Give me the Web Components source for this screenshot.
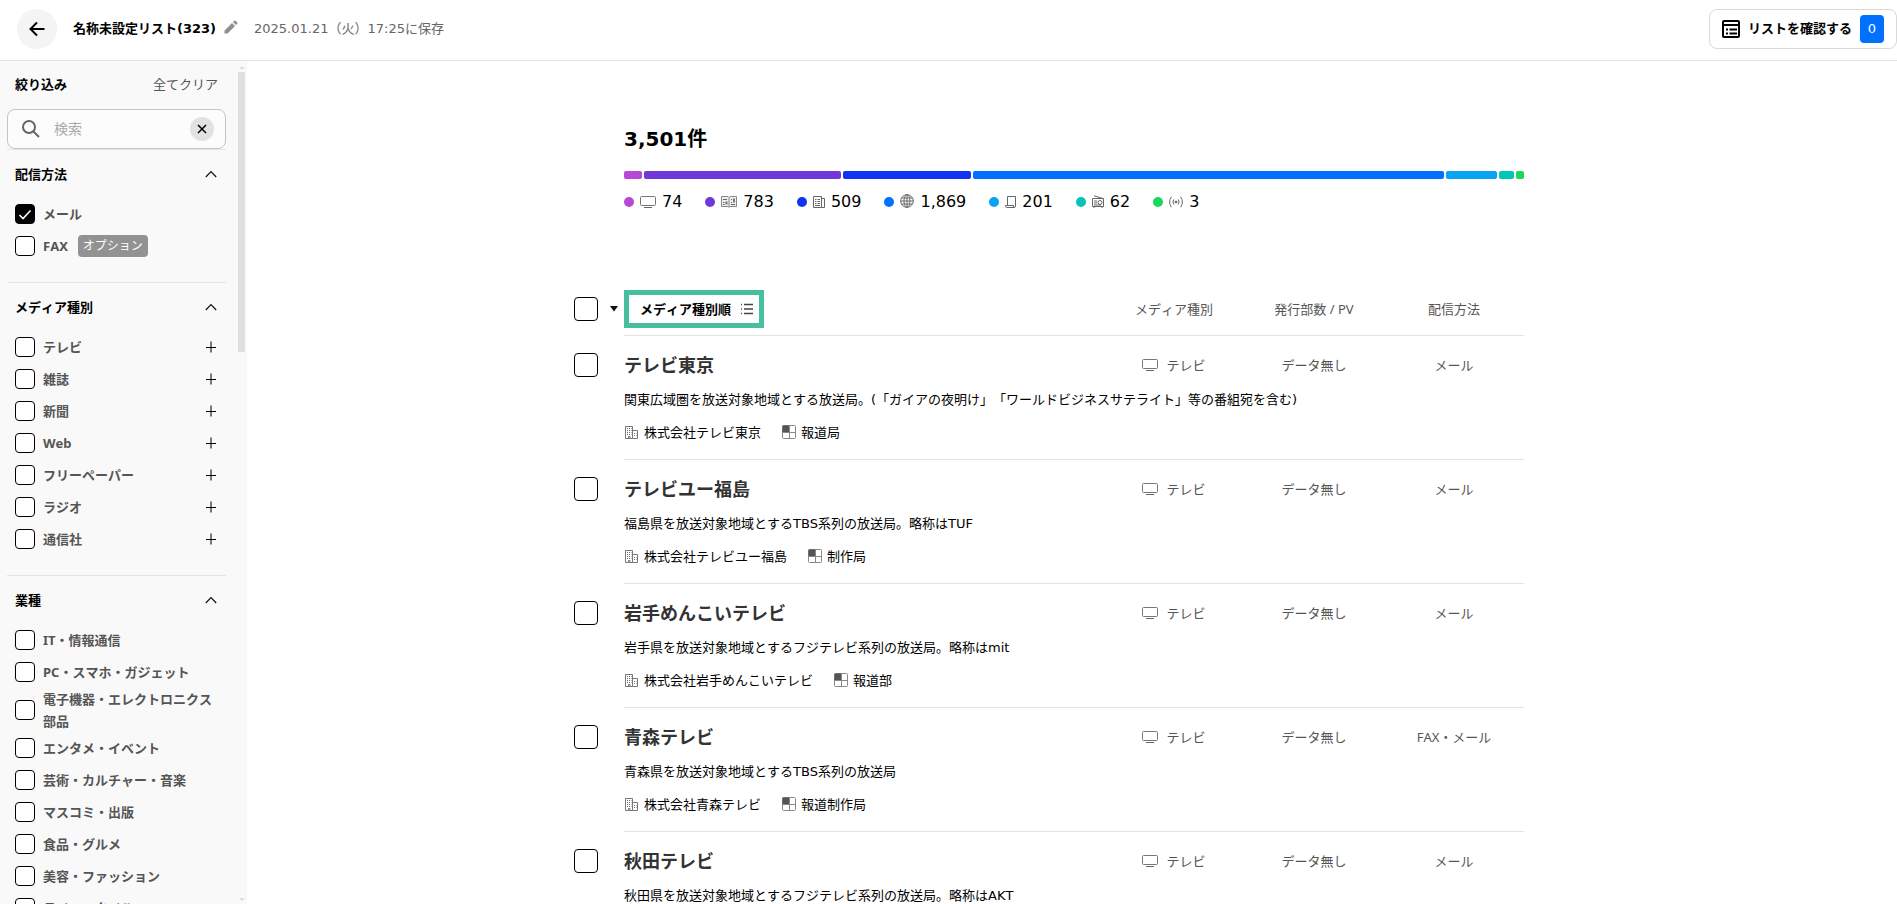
<!DOCTYPE html>
<html lang="ja">
<head>
<meta charset="utf-8">
<title>名称未設定リスト</title>
<style>
  :root {
    --font-ui: "Noto Sans", "Noto Sans CJK JP", sans-serif;
    --font-wide: "DejaVu Sans", "Noto Sans CJK JP", sans-serif;
    --line: #e4e4e4;
    --muted: #555;
  }
  body { margin: 0; background: #fff; color: #000; font: 13px/20px var(--font-ui); font-kerning: none; text-spacing-trim: space-all; }
</style>
</head>
<body>
<list-app>
  <app-header slot="header" heading="名称未設定リスト(323)" saved="2025.01.21（火）17:25に保存" count="0"></app-header>
  <filter-panel slot="filters">
    <filter-section heading="配信方法">
      <filter-option label="メール" checked></filter-option>
      <filter-option label="FAX" tag="オプション"></filter-option>
    </filter-section>
    <filter-section heading="メディア種別">
      <filter-option label="テレビ" expandable></filter-option>
      <filter-option label="雑誌" expandable></filter-option>
      <filter-option label="新聞" expandable></filter-option>
      <filter-option label="Web" expandable></filter-option>
      <filter-option label="フリーペーパー" expandable></filter-option>
      <filter-option label="ラジオ" expandable></filter-option>
      <filter-option label="通信社" expandable></filter-option>
    </filter-section>
    <filter-section heading="業種">
      <filter-option label="IT・情報通信"></filter-option>
      <filter-option label="PC・スマホ・ガジェット"></filter-option>
      <filter-option label="電子機器・エレクトロニクス部品"></filter-option>
      <filter-option label="エンタメ・イベント"></filter-option>
      <filter-option label="芸術・カルチャー・音楽"></filter-option>
      <filter-option label="マスコミ・出版"></filter-option>
      <filter-option label="食品・グルメ"></filter-option>
      <filter-option label="美容・ファッション"></filter-option>
      <filter-option label="ライフスタイル"></filter-option>
    </filter-section>
  </filter-panel>
  <media-summary total="3,501件"></media-summary>
  <media-table></media-table>
</list-app>

<script>
const RESET = `
  :host, *, *::before, *::after { box-sizing: border-box; }
  button { margin: 0; padding: 0; border: 0; background: none; color: inherit; font: inherit; cursor: pointer; }
  ui-icon { flex: none; }
`;

const CHECKBOX = `
  input[type=checkbox] {
    appearance: none; flex: none; margin: 0; width: var(--box, 20px); height: var(--box, 20px);
    border: 1px solid #000; border-radius: 4px; background: #fff; display: block;
  }
  input[type=checkbox]:checked {
    background: #000 url("data:image/svg+xml,%3Csvg xmlns='http://www.w3.org/2000/svg' viewBox='0 0 18 18'%3E%3Cpath d='M3.5 10l3.5 3.6L14.500 5.500' fill='none' stroke='white' stroke-width='1.500'/%3E%3C/svg%3E") center / 18px no-repeat;
  }
`;

/* name: [width, height, markup] */
const ICONS = {
  back: [16, 16, '<path d="M15.500 8H2M8 1.500L1.500 8 8 14.500" fill="none" stroke="#000" stroke-width="2"/>'],
  pencil: [14, 14, '<path d="M.5 10.500V13.500H3.500L11 6 8 3zM9 2L12 5 13.300 3.700Q13.800 3.200 13.300 2.600L11.400.7Q10.800.2 10.300.7z" fill="#8f8f8f"/>'],
  list: [18, 18, '<rect x="1" y="1" width="16" height="16" rx="1" fill="none" stroke="#000" stroke-width="2"/><path d="M1 5h16M4 9.500h2M7.500 9.500H15M4 13.500h2M7.500 13.500H15" stroke="#000" stroke-width="2"/>'],
  search: [18, 18, '<circle cx="7" cy="7" r="6" fill="none" stroke="#666" stroke-width="2"/><path d="M11.500 11.500L17 17" stroke="#666" stroke-width="2"/>'],
  close: [10, 10, '<path d="M1 1l8 8M9 1L1 9" stroke="#000" stroke-width="1.500"/>'],
  up: [12, 8, '<path d="M.8 7L6 1.500 11.200 7" fill="none" stroke="#111" stroke-width="1.200"/>'],
  plus: [10, 12, '<path d="M5 .5V11.500" stroke="#777" stroke-width="2"/><path d="M0 6.500H10" stroke="#000"/>'],
  caret: [8, 6, '<path d="M0 0H8L4 5.500z" fill="#111"/>'],
  lines: [12, 12, '<path d="M0 1.500h1M3 1.500h9M0 6h1M3 6h9M0 10.500h1M3 10.500h9" stroke="#444" stroke-width="1.500"/>'],
  tv: [16, 12, '<rect x=".5" y=".5" width="15" height="9" rx="1" fill="none" stroke="#777"/><path d="M4 11.500H12" stroke="#666"/>'],
  magazine: [16, 12, '<path d="M.5 .5H7L8 1.500 9 .5H15.500V10.500H9L8 11.500 7 10.500H.5zM8 1.500V11" fill="#eee" stroke="#888"/><path d="M2 3.500H6M2 6.500h1.500M2 8.500h1.500M10 3.500h1M10 6.500h1M10 8.500H14" stroke="#666"/><path d="M4.500 5.500h2v3h-2zM12 2.500h2v4h-2z" fill="#777"/>'],
  newspaper: [12, 12, '<path d="M.5 .5H8.500V11.500H.5zM8.500 2.500H11.500V11.500H8.500" fill="none" stroke="#666"/><path d="M2 3.500H3.500M4.500 3.500H7M2 5.500H3.500M4.500 5.500H7M2 7.500H3.500M4.500 7.500H7M2 9.500H7" stroke="#666"/>'],
  globe: [14, 16, '<g fill="none" stroke="#666"><circle cx="7" cy="7" r="6.300"/><ellipse cx="7" cy="7" rx="3" ry="6.300"/><path d="M7 .7V13.300M.7 7H13.300M1.500 4H12.500M1.500 10H12.500"/></g>'],
  paper: [11, 12, '<path d="M2.500 9V.5H10.500V10Q10.500 11.500 9 11.500H1.500Q.5 11.500.5 9.500H8.500V11" fill="none" stroke="#666"/>'],
  radio: [12, 15, '<path d="M.5 3.500H11.500V11.500H.5zM2 .8L11 3.500M2 11.500V13M10 11.500V13M2 6H5M2 8H5M2 10H9" fill="none" stroke="#666"/><circle cx="8" cy="7.500" r="2" fill="none" stroke="#666"/>'],
  antenna: [14, 12, '<circle cx="7" cy="6" r="1.300" fill="#666"/><path d="M4.800 3.500Q3 6 4.800 8.500M9.200 3.500Q11 6 9.200 8.500M2.500 .8Q-1.300 6 2.500 11.200M11.500 .8Q15.300 6 11.500 11.200" fill="none" stroke="#666"/>'],
  company: [16, 16, '<path d="M1.500 2.500H8.500V14.500H1.500zM8.500 6.500H13.500V14.500H8.500zM4.500 14.500V12.500H6V14.500" fill="none" stroke="#777"/><path d="M3 4.500H7.500M3 6.500H7.500M3 8.500H7.500M3 10.500H7.500M10 9.500H12.500M10 11.500H12.500" stroke="#666" stroke-dasharray="1 1"/>'],
  department: [16, 14, '<rect x="1.500" y=".5" width="13" height="13" rx="1" fill="none" stroke="#888"/><path d="M8.500 1V13M1 7.500H14" stroke="#888"/><path d="M1.500 .5H8V7H1.500z" fill="#555"/>']
};

customElements.define('ui-icon', class extends HTMLElement {
  connectedCallback() {
    if (this.shadowRoot) return;
    const [w, h, body] = ICONS[this.getAttribute('name')];
    this.attachShadow({ mode: 'open' }).innerHTML = `
      <style>:host { display: flex; } svg { display: block; }</style>
      <svg width="${w}" height="${h}" viewBox="0 0 ${w} ${h}" aria-hidden="true">${body}</svg>`;
  }
});

customElements.define('list-app', class extends HTMLElement {
  constructor() {
    super();
    this.attachShadow({ mode: 'open' }).innerHTML = `
      <style>
        ${RESET}
        :host { display: grid; grid-template: auto minmax(0, 1fr) / 247px minmax(0, 1fr); height: 100vh; overflow: hidden; }
        header { grid-column: 1 / -1; }
        aside { min-height: 0; display: flex; }
        main { overflow: hidden; padding: 66px 50px 0 54px; }
        .content { max-width: 900px; margin: 0 auto; }
      </style>
      <header><slot name="header"></slot></header>
      <aside><slot name="filters"></slot></aside>
      <main><div class="content"><slot></slot></div></main>`;
  }
});

customElements.define('app-header', class extends HTMLElement {
  connectedCallback() {
    if (this.shadowRoot) return;
    this.attachShadow({ mode: 'open' }).innerHTML = `
      <style>
        ${RESET}
        :host { display: flex; align-items: center; height: 61px; padding: 0 0 2px 17px; border-bottom: 1px solid var(--line); font-family: var(--font-wide); }
        .back { width: 40px; height: 40px; border-radius: 50%; background: #f4f4f4; display: grid; place-items: center; }
        h1 { margin: 0 8px 0 16px; font-size: 13px; line-height: 20px; font-weight: 700; }
        .edit { padding-bottom: 4px; }
        time { margin-left: 16px; color: #666; }
        .confirm { margin-left: auto; display: flex; align-items: center; gap: 8px; height: 40px; padding: 0 12px; border: 1px solid #d9d9d9; border-radius: 8px; font-weight: 700; }
        .badge { width: 24px; line-height: 28px; border-radius: 4px; background: #0070ff; color: #fff; font-weight: 400; text-align: center; }
      </style>
      <button class="back" aria-label="戻る"><ui-icon name="back"></ui-icon></button>
      <h1>${this.getAttribute('heading')}</h1>
      <button class="edit" aria-label="名称を編集"><ui-icon name="pencil"></ui-icon></button>
      <time datetime="2025-01-21T17:25">${this.getAttribute('saved')}</time>
      <button class="confirm"><ui-icon name="list"></ui-icon><span>リストを確認する</span><span class="badge">${this.getAttribute('count')}</span></button>`;
  }
});

customElements.define('filter-panel', class extends HTMLElement {
  constructor() {
    super();
    this.attachShadow({ mode: 'open' }).innerHTML = `
      <style>
        ${RESET}
        :host { flex: 1; display: flex; overflow: hidden; background: #f9f9f9; }
        .scroll { flex: 1; min-width: 0; padding: 0 12px 0 7px; overflow: hidden; }
        .head { display: flex; justify-content: space-between; align-items: center; height: 48px; padding: 0 8px 2px; }
        h2 { margin: 0; font-size: 13px; line-height: 20px; font-weight: 700; }
        .head button { color: var(--muted); }
        .search { display: flex; align-items: center; gap: 14px; height: 40px; padding: 0 11px 0 14px; border: 1px solid #c4c4c4; border-radius: 8px; background: #fcfcfc; }
        .search label { display: flex; }
        input { flex: 1; min-width: 0; border: 0; padding: 0; background: none; font: inherit; font-size: 14px; outline: 0; }
        input::placeholder { color: #aaa; }
        .clear { width: 24px; height: 24px; border-radius: 50%; background: #e2e2e2; display: grid; place-items: center; }
        .bar { width: 9px; padding: 5px 2px 3px 0; display: flex; flex-direction: column; align-items: center; gap: 3px; }
        .bar::before, .bar::after { content: ""; border: 3px solid transparent; }
        .bar::before { border-top: 0; border-bottom-color: #ddd; }
        .bar::after { border-bottom: 0; border-top-color: #ddd; margin-top: auto; }
        .thumb { width: 7px; height: 280px; background: #dfdfdf; }
      </style>
      <div class="scroll">
        <div class="head"><h2>絞り込み</h2><button>全てクリア</button></div>
        <div class="search">
          <label for="q" aria-label="検索"><ui-icon name="search"></ui-icon></label>
          <input id="q" type="text" placeholder="検索">
          <button class="clear" aria-label="検索語を消去"><ui-icon name="close"></ui-icon></button>
        </div>
        <slot></slot>
      </div>
      <div class="bar"><div class="thumb"></div></div>`;
  }
});

customElements.define('filter-section', class extends HTMLElement {
  connectedCallback() {
    if (this.shadowRoot) return;
    this.attachShadow({ mode: 'open' }).innerHTML = `
      <style>
        ${RESET}
        :host { display: block; padding: 0 8px 20px; border-top: 1px solid var(--line); }
        h3 { margin: 0; font-size: 13px; font-weight: 700; }
        h3 button { display: flex; justify-content: space-between; align-items: center; width: 100%; height: 48px; padding-right: 1px; }
      </style>
      <h3><button aria-expanded="true">${this.getAttribute('heading')}<ui-icon name="up"></ui-icon></button></h3>
      <slot></slot>`;
  }
});

customElements.define('filter-option', class extends HTMLElement {
  connectedCallback() {
    if (this.shadowRoot) return;
    const tag = this.getAttribute('tag');
    this.attachShadow({ mode: 'open' }).innerHTML = `
      <style>
        ${RESET}
        ${CHECKBOX}
        :host { display: flex; align-items: center; min-height: 32px; padding-right: 2px; color: var(--muted); font-weight: 700; line-height: 22px; }
        label { flex: 1; display: flex; align-items: center; gap: 8px; }
        .tag { margin-left: 2px; padding: 0 5px; border-radius: 4px; background: #929292; color: #fff; font-size: 12px; font-weight: 400; }
      </style>
      <label><input type="checkbox"${this.hasAttribute('checked') ? ' checked' : ''}><span>${this.getAttribute('label')}</span>
        ${tag ? `<span class="tag">${tag}</span>` : ''}</label>
      ${this.hasAttribute('expandable') ? `<button aria-label="${this.getAttribute('label')}を開く"><ui-icon name="plus"></ui-icon></button>` : ''}`;
  }
});

/* icon, label, colour, share of the bar */
const KINDS = [
  ['tv', '74', '#b947d6', 18],
  ['magazine', '783', '#7038d8', 197],
  ['newspaper', '509', '#1033f4', 128],
  ['globe', '1,869', '#0070ff', 470],
  ['paper', '201', '#06a3f7', 51],
  ['radio', '62', '#02c6b5', 15],
  ['antenna', '3', '#18d95c', 8]
];

customElements.define('media-summary', class extends HTMLElement {
  connectedCallback() {
    if (this.shadowRoot) return;
    this.attachShadow({ mode: 'open' }).innerHTML = `
      <style>
        ${RESET}
        :host { display: block; padding-bottom: 71px; font-family: var(--font-wide); }
        h2 { margin: 0 0 20px; font-size: 20px; line-height: 24px; }
        .bar { display: flex; gap: 2px; height: 8px; }
        .bar span { border-radius: 2px; }
        ul { display: flex; gap: 23px; margin: 11px 0 0; padding: 0; list-style: none; font-size: 16px; line-height: 24px; }
        li { display: flex; align-items: center; gap: 6px; }
        li::before { content: ""; width: 10px; height: 10px; border-radius: 50%; background: var(--dot); }
      </style>
      <h2>${this.getAttribute('total')}</h2>
      <div class="bar">${KINDS.map(k => `<span style="flex:${k[3]} 0 0;background:${k[2]}"></span>`).join('')}</div>
      <ul>${KINDS.map(k => `<li style="--dot:${k[2]}"><ui-icon name="${k[0]}"></ui-icon>${k[1]}</li>`).join('')}</ul>`;
  }
});

const MEDIA = [
  ['テレビ東京', 'メール', '関東広域圏を放送対象地域とする放送局。(「ガイアの夜明け」「ワールドビジネスサテライト」等の番組宛を含む)', '株式会社テレビ東京', '報道局'],
  ['テレビユー福島', 'メール', '福島県を放送対象地域とするTBS系列の放送局。略称はTUF', '株式会社テレビユー福島', '制作局'],
  ['岩手めんこいテレビ', 'メール', '岩手県を放送対象地域とするフジテレビ系列の放送局。略称はmit', '株式会社岩手めんこいテレビ', '報道部'],
  ['青森テレビ', 'FAX・メール', '青森県を放送対象地域とするTBS系列の放送局', '株式会社青森テレビ', '報道制作局'],
  ['秋田テレビ', 'メール', '秋田県を放送対象地域とするフジテレビ系列の放送局。略称はAKT', '株式会社秋田テレビ', '報道部']
];

customElements.define('media-table', class extends HTMLElement {
  connectedCallback() {
    if (this.shadowRoot) return;
    this.attachShadow({ mode: 'open' }).innerHTML = `
      <style>
        ${RESET}
        ${CHECKBOX}
        :host { display: block; margin-left: -50px; --box: 24px; }
        table { width: 100%; table-layout: fixed; border-spacing: 0; }
        col.pick { width: 50px; }
        col.info { width: 140px; }
        th, td { padding: 0; text-align: left; font-weight: 400; vertical-align: top; }
        thead th { height: 51px; padding-bottom: 2px; vertical-align: middle; color: var(--muted); text-align: center; border-bottom: 1px solid var(--line); }
        thead th:first-child { border-bottom-color: transparent; }
        thead th:nth-child(2) { text-align: left; }
        .all { display: flex; align-items: center; gap: 12px; }
        .sort { display: flex; align-items: center; gap: 10px; height: 38px; padding: 0 6px 0 11px; border: 5px solid #45bfa0; color: #000; font-weight: 700; }
        .top > * { padding-top: 16px; line-height: 26px; height: 42px; }
        .top > td { text-align: center; color: var(--muted); }
        .top input { margin-top: 1px; }
        h3 { margin: 0; font-size: 18px; line-height: 26px; color: #333; }
        .kind { display: flex; justify-content: center; align-items: center; gap: 8px; }
        .more { padding: 12px 0 17px; border-bottom: 1px solid var(--line); }
        p { margin: 0 0 12px; font-family: var(--font-wide); line-height: 20px; }
        .meta { display: flex; gap: 20px; }
        .meta span { display: flex; align-items: center; gap: 4px; }
      </style>
      <table>
        <colgroup><col class="pick"><col><col class="info"><col class="info"><col class="info"></colgroup>
        <thead><tr>
          <th scope="col"><div class="all"><input type="checkbox" aria-label="全て選択"><button aria-label="選択メニュー"><ui-icon name="caret"></ui-icon></button></div></th>
          <th scope="col"><button class="sort">メディア種別順<ui-icon name="lines"></ui-icon></button></th>
          <th scope="col">メディア種別</th><th scope="col">発行部数 / PV</th><th scope="col">配信方法</th>
        </tr></thead>
        ${MEDIA.map(([name, method, text, company, dept]) => `<tbody>
          <tr class="top">
            <td rowspan="2"><input type="checkbox" aria-label="${name}"></td>
            <th scope="rowgroup"><h3>${name}</h3></th>
            <td><div class="kind"><ui-icon name="tv"></ui-icon>テレビ</div></td><td>データ無し</td><td>${method}</td>
          </tr>
          <tr><td class="more" colspan="4"><p>${text}</p>
            <div class="meta"><span><ui-icon name="company"></ui-icon>${company}</span><span><ui-icon name="department"></ui-icon>${dept}</span></div></td></tr>
        </tbody>`).join('')}
      </table>`;
  }
});
</script>
</body>
</html>
